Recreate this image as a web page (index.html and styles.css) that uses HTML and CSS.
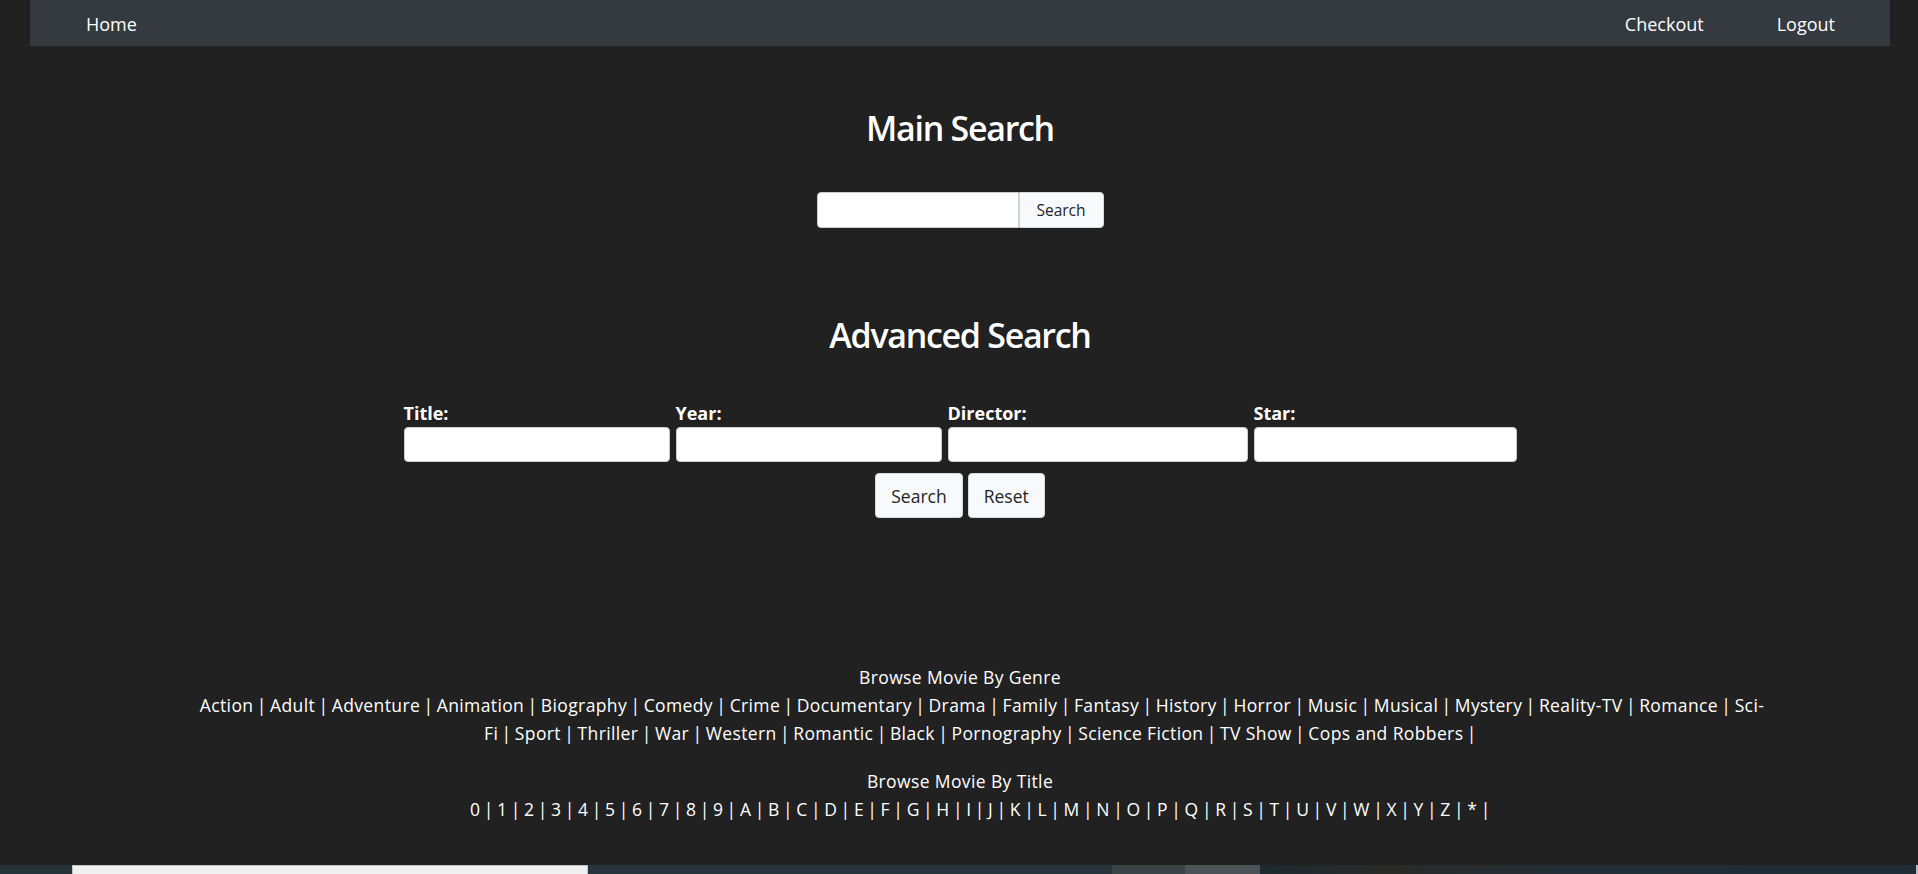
FILE: index.html
```html
<!DOCTYPE html>
<html lang="en">
<head>
<meta charset="utf-8">
<title>Movie Search</title>
<link rel="stylesheet" href="styles.css">
</head>
<body>
<div class="page">
  <nav class="navbar">
    <a class="nav-link" href="#">Home</a>
    <div class="nav-right">
      <a class="nav-link" href="#">Checkout</a>
      <a class="nav-link" href="#">Logout</a>
    </div>
  </nav>

  <main class="main">
    <h2 class="heading heading-main">Main Search</h2>
    <form class="quick">
      <input class="quick-input" type="text">
      <button class="btn quick-btn" type="button">Search</button>
    </form>

    <h2 class="heading heading-adv">Advanced Search</h2>
    <form class="adv">
      <div class="fields">
        <label class="field field-title"><span class="field-label">Title:</span><input class="field-input" type="text"></label>
        <label class="field field-year"><span class="field-label">Year:</span><input class="field-input" type="text"></label>
        <label class="field field-director"><span class="field-label">Director:</span><input class="field-input" type="text"></label>
        <label class="field field-star"><span class="field-label">Star:</span><input class="field-input" type="text"></label>
      </div>
      <div class="actions">
        <button class="btn adv-btn" type="button">Search</button>
        <button class="btn adv-btn" type="button">Reset</button>
      </div>
    </form>

    <section class="browse">
      <div class="browse-head">Browse Movie By Genre</div>
      <div class="browse-links"><a href="#">Action</a><span class="sep">|</span><wbr><a href="#">Adult</a><span class="sep">|</span><wbr><a href="#">Adventure</a><span class="sep">|</span><wbr><a href="#">Animation</a><span class="sep">|</span><wbr><a href="#">Biography</a><span class="sep">|</span><wbr><a href="#">Comedy</a><span class="sep">|</span><wbr><a href="#">Crime</a><span class="sep">|</span><wbr><a href="#">Documentary</a><span class="sep">|</span><wbr><a href="#">Drama</a><span class="sep">|</span><wbr><a href="#">Family</a><span class="sep">|</span><wbr><a href="#">Fantasy</a><span class="sep">|</span><wbr><a href="#">History</a><span class="sep">|</span><wbr><a href="#">Horror</a><span class="sep">|</span><wbr><a href="#">Music</a><span class="sep">|</span><wbr><a href="#">Musical</a><span class="sep">|</span><wbr><a href="#">Mystery</a><span class="sep">|</span><wbr><a href="#">Reality-TV</a><span class="sep">|</span><wbr><a href="#">Romance</a><span class="sep">|</span><wbr><a href="#"><span class="part">Sci-</span><span class="part">Fi</span></a><span class="sep">|</span><wbr><a href="#">Sport</a><span class="sep">|</span><wbr><a href="#">Thriller</a><span class="sep">|</span><wbr><a href="#">War</a><span class="sep">|</span><wbr><a href="#">Western</a><span class="sep">|</span><wbr><a href="#">Romantic</a><span class="sep">|</span><wbr><a href="#">Black</a><span class="sep">|</span><wbr><a href="#">Pornography</a><span class="sep">|</span><wbr><a href="#">Science Fiction</a><span class="sep">|</span><wbr><a href="#">TV Show</a><span class="sep">|</span><wbr><a href="#">Cops and Robbers</a><span class="sep">|</span></div>
      <div class="browse-head browse-head-title">Browse Movie By Title</div>
      <div class="browse-links"><a href="#">0</a><span class="sep">|</span><wbr><a href="#">1</a><span class="sep">|</span><wbr><a href="#">2</a><span class="sep">|</span><wbr><a href="#">3</a><span class="sep">|</span><wbr><a href="#">4</a><span class="sep">|</span><wbr><a href="#">5</a><span class="sep">|</span><wbr><a href="#">6</a><span class="sep">|</span><wbr><a href="#">7</a><span class="sep">|</span><wbr><a href="#">8</a><span class="sep">|</span><wbr><a href="#">9</a><span class="sep">|</span><wbr><a href="#">A</a><span class="sep">|</span><wbr><a href="#">B</a><span class="sep">|</span><wbr><a href="#">C</a><span class="sep">|</span><wbr><a href="#">D</a><span class="sep">|</span><wbr><a href="#">E</a><span class="sep">|</span><wbr><a href="#">F</a><span class="sep">|</span><wbr><a href="#">G</a><span class="sep">|</span><wbr><a href="#">H</a><span class="sep">|</span><wbr><a href="#">I</a><span class="sep">|</span><wbr><a href="#">J</a><span class="sep">|</span><wbr><a href="#">K</a><span class="sep">|</span><wbr><a href="#">L</a><span class="sep">|</span><wbr><a href="#">M</a><span class="sep">|</span><wbr><a href="#">N</a><span class="sep">|</span><wbr><a href="#">O</a><span class="sep">|</span><wbr><a href="#">P</a><span class="sep">|</span><wbr><a href="#">Q</a><span class="sep">|</span><wbr><a href="#">R</a><span class="sep">|</span><wbr><a href="#">S</a><span class="sep">|</span><wbr><a href="#">T</a><span class="sep">|</span><wbr><a href="#">U</a><span class="sep">|</span><wbr><a href="#">V</a><span class="sep">|</span><wbr><a href="#">W</a><span class="sep">|</span><wbr><a href="#">X</a><span class="sep">|</span><wbr><a href="#">Y</a><span class="sep">|</span><wbr><a href="#">Z</a><span class="sep">|</span><wbr><a href="#">*</a><span class="sep">|</span></div>
    </section>
  </main>
</div>
<div class="taskbar">
  <div class="tb-gap-left"></div>
  <div class="tb-search"></div>
  <div class="tb-mid"></div>
  <div class="tb-app"></div>
  <div class="tb-app tb-app-active"></div>
  <div class="tb-rest"></div>
</div>
</body>
</html>
```

FILE: styles.css
```css
* { box-sizing: border-box; }

html, body {
  margin: 0;
  padding: 0;
  background: #212121;
}

body {
  min-height: 100vh;
  display: flex;
  flex-direction: column;
  font-family: "Open Sans", "Noto Sans", "Liberation Sans", sans-serif;
  color: #ffffff;
  font-size: 18px;
}

.page {
  flex: 1;
  padding: 0 28px 0 30px;
}

.navbar {
  height: 46px;
  background: #343a40;
  display: flex;
  align-items: flex-start;
  justify-content: space-between;
  padding: 3px 55px 0 56px;
}

.nav-link {
  color: #ffffff;
  text-decoration: none;
  line-height: 42px;
  font-size: 18px;
}

.nav-right {
  display: flex;
  gap: 73px;
}

.main {
  display: flex;
  flex-direction: column;
  align-items: center;
}

.heading {
  margin: 0;
  font-size: 34px;
  line-height: 42px;
  font-weight: 600;
  letter-spacing: -1.3px;
}

.heading-main { margin-top: 61px; }
.heading-adv { margin-top: 86px; }

.quick {
  margin: 43px 0 0;
  display: flex;
}

.quick-input {
  width: 202px;
  height: 36px;
  border: 1px solid #c9ccd0;
  border-radius: 4px 0 0 4px;
  background: #ffffff;
  margin: 0;
}

.btn {
  font-family: inherit;
  background: #f8f9fa;
  color: #212529;
  border: 1px solid #d6d8db;
  border-radius: 4px;
  margin: 0;
  cursor: pointer;
}

.quick-btn {
  width: 85px;
  height: 36px;
  font-size: 15.5px;
  border-radius: 0 4px 4px 0;
  padding: 0;
}

.adv {
  margin-top: 47px;
  display: flex;
  flex-direction: column;
  align-items: center;
}

.fields {
  display: flex;
  gap: 6px;
}

.field {
  display: flex;
  flex-direction: column;
  gap: 4px;
}

.field-title { width: 266px; }
.field-year { width: 266px; }
.field-director { width: 300px; }
.field-star { width: 263px; }

.field-label {
  font-weight: 700;
  font-size: 18px;
  line-height: 20px;
}

.field-input {
  width: 100%;
  height: 35px;
  border: 1px solid #c9ccd0;
  border-radius: 4px;
  background: #ffffff;
  margin: 0;
}

.actions {
  margin-top: 11px;
  display: flex;
  gap: 5px;
}

.adv-btn {
  height: 45px;
  font-size: 17.5px;
  padding: 0 15px;
}

.browse {
  margin-top: 145px;
  width: 1620px;
  text-align: center;
  font-size: 17.5px;
  letter-spacing: 0.38px;
  line-height: 28px;
}

.browse-head {
  color: #ffffff;
}

.browse-head-title { margin-top: 20px; }

.browse-links {
  padding-left: 44px;
}

.browse-links a {
  color: #ffffff;
  text-decoration: none;
}

.sep {
  padding: 0 3.3px;
}

.taskbar {
  height: 9px;
  display: flex;
  background: #253238;
}

.tb-gap-left { width: 72px; }

.tb-search {
  width: 516px;
  background: #f0f0f0;
  border: 1px solid #c4c4c4;
  border-bottom: none;
}

.tb-mid {
  width: 524px;
  background: #26353c;
}

.tb-app {
  width: 73px;
  background: #3b4447;
}

.tb-app-active {
  width: 75px;
  background: #4b5357;
}

.tb-rest {
  flex: 1;
  background: linear-gradient(90deg, #1e2a30 0%, #2a2a28 20%, #232e36 45%, #1f2c35 100%);
  border-right: 2px solid #b8bcc0;
}
```
